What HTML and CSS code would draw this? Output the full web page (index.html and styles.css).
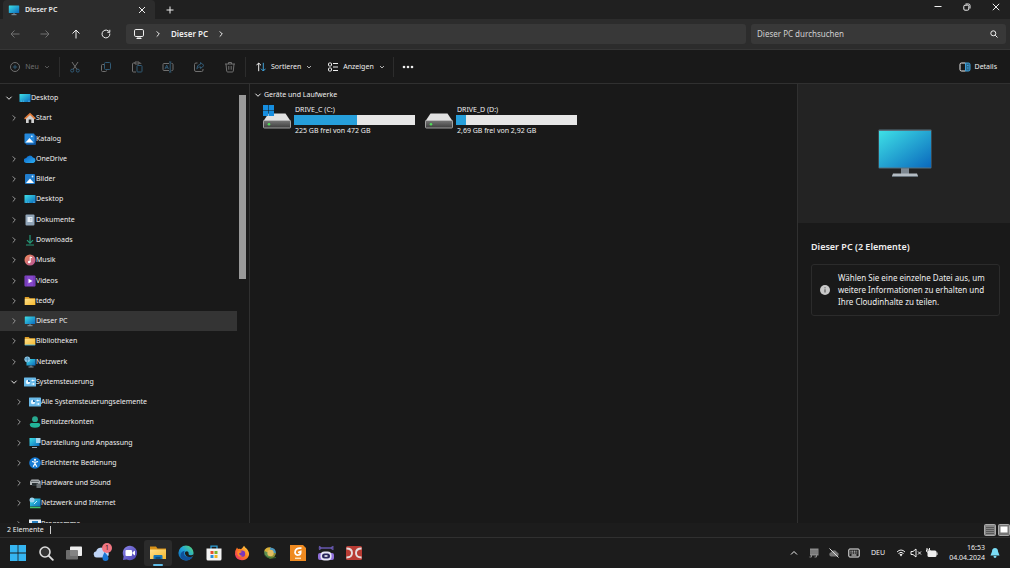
FILE: index.html
```html
<!DOCTYPE html>
<html lang="de">
<head>
    <meta charset="UTF-8">
    <meta name="viewport" content="width=device-width, initial-scale=1.0">
    <title>Dieser PC</title>
    <link rel="stylesheet" href="styles.css">
</head>
<body>

<!-- shared icons -->
<svg class="sprite" aria-hidden="true">
    <defs>
        <linearGradient id="screen" x1="0" y1="0" x2="1" y2="1"><stop offset="0" stop-color="#3ee0e6"/><stop offset="1" stop-color="#0a68bd"/></linearGradient>
        <linearGradient id="cloud" x1="0" y1="0" x2="1" y2="1"><stop offset="0" stop-color="#0b62c4"/><stop offset="1" stop-color="#2bb0f5"/></linearGradient>
        <linearGradient id="music" x1="0" y1="0" x2="1" y2="1"><stop offset="0" stop-color="#f08a55"/><stop offset="1" stop-color="#b5549a"/></linearGradient>
        <linearGradient id="gold" x1="0" y1="0" x2="1" y2="1"><stop offset="0" stop-color="#ffe08a"/><stop offset="1" stop-color="#f5b92e"/></linearGradient>
        <linearGradient id="drive" x1="0" y1="0" x2="0" y2="1"><stop offset="0" stop-color="#777"/><stop offset="1" stop-color="#3c3c3c"/></linearGradient>
        <linearGradient id="edge" x1="0" y1="1" x2="1" y2="0"><stop offset="0" stop-color="#0c59a4"/><stop offset=".5" stop-color="#1fa2dd"/><stop offset="1" stop-color="#5ee06b"/></linearGradient>
        <linearGradient id="fire" x1="1" y1="0" x2="0" y2="1"><stop offset="0" stop-color="#ffe04a"/><stop offset=".5" stop-color="#ff7a1f"/><stop offset="1" stop-color="#e8217a"/></linearGradient>
        <linearGradient id="chat" x1="0" y1="0" x2="1" y2="1"><stop offset="0" stop-color="#8a85e8"/><stop offset="1" stop-color="#4a3fb0"/></linearGradient>
    </defs>
    <symbol id="right" viewBox="0 0 8 8"><path d="M2.700 1.400 5.300 4 2.700 6.600" class="line"/></symbol>
    <symbol id="down" viewBox="0 0 8 8"><path d="M1.400 2.700 4 5.300 6.600 2.700" class="line"/></symbol>
    <symbol id="desktop" viewBox="0 0 12 12"><rect x=".5" y="2" width="11" height="8" rx=".6" fill="url(#screen)"/><path d="M2 9.200h1M4 9.200h1M9 9.200h2" stroke="#7ac7ee" stroke-width=".6"/></symbol>
    <symbol id="home" viewBox="0 0 12 12"><path d="M2 5.500 6 2l4 3.500V11H7.300V7.500H4.700V11H2z" fill="#cfcfcf"/><path d="M1.200 6.300 6 1.800l4.800 4.500" fill="none" stroke="#e07b3a" stroke-width="1.700" stroke-linecap="round"/></symbol>
    <symbol id="gallery" viewBox="0 0 12 12"><rect x="2" y="2" width="10" height="10" rx="1" fill="#11539a"/><rect x=".5" y=".5" width="10" height="10" rx="1" fill="#2589dc"/><path d="M1.500 9.500 5.500 5l4 4.500z" fill="#fff"/><circle cx="7.800" cy="3.300" r=".9" fill="#d9f0ff"/></symbol>
    <symbol id="pictures" viewBox="0 0 12 12"><rect x="1" y="1" width="10" height="10" rx="1" fill="#217dcc"/><path d="M2 10 6 5.500l4 4.500z" fill="#fff"/><circle cx="8.500" cy="3.500" r=".9" fill="#d9f0ff"/></symbol>
    <symbol id="onedrive" viewBox="0 0 12 12"><path d="M2.500 10a2.500 2.500 0 0 1-.3-5A3.800 3.800 0 0 1 9 4.500 2.800 2.800 0 0 1 9.300 10z" fill="url(#cloud)"/></symbol>
    <symbol id="document" viewBox="0 0 12 12"><rect x="1.500" y=".5" width="9" height="11" rx="1" fill="#91a5b9"/><rect x="3.500" y="3" width="5" height="5" fill="#e5edf4"/><path d="M6 4.500h1.500M6 6h1.500" stroke="#8fa5b8" stroke-width=".7"/></symbol>
    <symbol id="download" viewBox="0 0 12 12"><path d="M6 1v8M3 6.200 6 9.200l3-3M2 11h8" fill="none" stroke="#259878" stroke-width="1.200"/></symbol>
    <symbol id="musik" viewBox="0 0 12 12"><circle cx="6" cy="6" r="5.500" fill="url(#music)"/><path d="M6.200 8V3l2 .8" fill="none" stroke="#fff" stroke-width="1"/><circle cx="5.200" cy="8" r="1.300" fill="#fff"/></symbol>
    <symbol id="video" viewBox="0 0 12 12"><rect x=".5" y=".5" width="11" height="11" rx="1" fill="#8547ca"/><path d="M2 1.500v9M10 1.500v9" stroke="#4d2388" stroke-dasharray="1 1"/><path d="m4.500 3.700 4 2.300-4 2.300z" fill="#fff"/></symbol>
    <symbol id="folder" viewBox="0 0 12 12"><path d="M.8 2h4l1 1.200h5.400V10H.8z" fill="#dc9c25"/><path d="M.8 3.800h10.400V10H.8z" fill="url(#gold)"/></symbol>
    <symbol id="library" viewBox="0 0 12 12"><use href="#folder"/><path d="M.8 10h10.400" stroke="#58bfe6" stroke-width=".9"/></symbol>
    <symbol id="pc" viewBox="0 0 12 12"><rect x=".8" y="1.500" width="10.400" height="7.500" rx=".5" fill="url(#screen)"/><path d="M6 9v1.500M3.500 10.700h5" stroke="#8da1af" stroke-width=".9"/></symbol>
    <symbol id="network" viewBox="0 0 12 12"><rect x="2.500" y="3" width="9" height="6.500" fill="url(#screen)"/><path d="M7 9.500V11M4.500 11h5" stroke="#8da1af" stroke-width=".9"/><circle cx="3.300" cy="3.300" r="2.900" fill="#8dc9e8"/><path d="M1 3h4.600M3.300.6v5.300" stroke="#2f759f" stroke-width=".6"/></symbol>
    <symbol id="control" viewBox="0 0 12 12"><rect x="0" y="1.500" width="12" height="9" rx=".6" fill="#69b9e8"/><circle cx="4" cy="6" r="2.200" fill="#e8f6ff"/><path d="M4 6V3.800A2.200 2.200 0 0 1 6.200 6z" fill="#196cb0"/><path d="M7.500 4.500h3M7.500 8h3M8.500 3.700v1.600M9.500 7.200v1.600" stroke="#fff" stroke-width=".8"/></symbol>
    <symbol id="user" viewBox="0 0 12 12"><circle cx="6" cy="3.200" r="2.900" fill="#28a98f"/><path d="M.8 8.500Q.8 7 2.500 7h7q1.700 0 1.700 1.500Q11 11.700 6 11.700T.8 8.500" fill="#22b59a"/></symbol>
    <symbol id="display" viewBox="0 0 12 12"><rect x=".5" y="1" width="10" height="8" fill="url(#screen)"/><path d="M3 10.500h5" stroke="#9baab5"/><rect x="7" y="1" width="4.500" height="5" fill="#a5d3ec"/></symbol>
    <symbol id="access" viewBox="0 0 12 12"><circle cx="6" cy="6" r="5.800" fill="#177bd4"/><circle cx="6" cy="2.800" r="1.100" fill="#fff"/><path d="M3 4.500 6 5.300l3-.8M6 5v2M4.200 9.700 6 6.500l1.800 3.200" fill="none" stroke="#fff" stroke-width="1.200"/></symbol>
    <symbol id="hardware" viewBox="0 0 12 12"><path d="M1 4.500 2.500 2.500h7L11.500 4.500V8H1z" fill="#b3b8bb"/><path d="M2 4.300h8" stroke="#5e6569"/><path d="M3 6h6v3H3z" fill="#293033"/><rect x="7.500" y="6.500" width="4.500" height="4.500" fill="#686e72"/></symbol>
    <symbol id="internet" viewBox="0 0 12 12"><rect x="1" y="1.500" width="10.500" height="8" fill="url(#screen)"/><circle cx="3" cy="3" r="2.500" fill="#9bd1ed"/><path d="M1 10.500h10.500" stroke="#45c26b" stroke-width="1.500"/><path d="m5 7 3-3" stroke="#bdeeff"/></symbol>
    <symbol id="program" viewBox="0 0 12 12"><rect x="0" y="1.500" width="12" height="9.500" fill="#e8eef2"/><rect x="3" y="3" width="6" height="6" fill="#267dbd"/></symbol>
    <symbol id="hdd" viewBox="0 0 28 24"><path d="M5.500 8.500h17L27.500 16H.5z" fill="#e2e2e2"/><rect x=".5" y="15.500" width="27" height="7.500" rx=".8" fill="url(#drive)" stroke="#bcbcbc" stroke-width=".8"/><circle cx="6" cy="19.300" r="1.300" fill="#50dc58"/></symbol>
    <symbol id="windows" viewBox="0 0 16 16"><path d="M0 0h7.600v7.600H0zM8.400 0H16v7.600H8.400zM0 8.400h7.600V16H0zM8.400 8.400H16V16H8.400z"/></symbol>
</svg>

<header class="titlebar">
    <div class="tab">
        <svg class="icon-12"><use href="#pc"/></svg>
        <span class="tab-name">Dieser PC</span>
        <button class="tab-close" aria-label="Tab schließen"><svg class="icon-8" viewBox="0 0 8 8"><path d="m1 1 6 6M7 1 1 7" class="line"/></svg></button>
    </div>
    <button class="new-tab" aria-label="Neuer Tab"><svg class="icon-8" viewBox="0 0 8 8"><path d="M4 .5v7M.5 4h7" class="line"/></svg></button>
    <div class="window-buttons">
        <button aria-label="Minimieren"><svg class="icon-8" viewBox="0 0 8 8"><path d="M.5 3.500h7" class="line"/></svg></button>
        <button aria-label="Verkleinern"><svg class="icon-8" viewBox="0 0 8 8"><path d="M2.500 1h3A1.500 1.500 0 0 1 7 2.500v3" class="line"/><rect x=".8" y="2.200" width="5" height="5" rx="1.200" class="line"/></svg></button>
        <button aria-label="Schließen"><svg class="icon-8" viewBox="0 0 8 8"><path d="m.8.8 6.400 6.400M7.200.8.8 7.200" class="line"/></svg></button>
    </div>
</header>

<div class="navbar">
    <div class="nav-buttons">
        <button class="muted" aria-label="Zurück" disabled><svg class="icon-10" viewBox="0 0 10 10"><path d="M9.500 5h-8.500M4.500 1.500 1 5l3.500 3.500" class="line"/></svg></button>
        <button class="muted" aria-label="Vorwärts" disabled><svg class="icon-10" viewBox="0 0 10 10"><path d="M.5 5H9M5.500 1.500 9 5 5.500 8.500" class="line"/></svg></button>
        <button aria-label="Nach oben"><svg class="icon-10" viewBox="0 0 10 10"><path d="M5 9.500V1M1.500 4.500 5 1l3.500 3.500" class="line"/></svg></button>
        <button aria-label="Aktualisieren"><svg class="icon-10" viewBox="0 0 10 10"><path d="M8.800 4.500A3.900 3.900 0 1 1 7.300 1.900L8.500 3M8.800.8v2.500H6.300" class="line"/></svg></button>
    </div>
    <nav class="address" aria-label="Adresse">
        <svg class="icon-12" viewBox="0 0 12 12"><rect x="1.500" y="1.500" width="9" height="7" rx="1.300" class="line"/><path d="M3.500 10.500h5M5 8.500v2M7 8.500v2" class="line"/></svg>
        <svg class="icon-8"><use href="#right"/></svg>
        <button class="crumb">Dieser PC</button>
        <svg class="icon-8"><use href="#right"/></svg>
    </nav>
    <label class="search">
        <input type="search" placeholder="Dieser PC durchsuchen" aria-label="Dieser PC durchsuchen">
        <svg class="icon-8" viewBox="0 0 8 8"><circle cx="3.300" cy="3.300" r="2.500" class="line"/><path d="M5.200 5.200 7.500 7.500" class="line"/></svg>
    </label>
</div>

<div class="toolbar">
    <button class="tool new muted" disabled>
        <svg class="icon-10" viewBox="0 0 10 10"><circle cx="5" cy="5" r="4.500" class="line"/><path d="M5 2.800v4.400M2.800 5h4.400" class="line blue"/></svg>
        Neu
        <svg class="icon-6"><use href="#down"/></svg>
    </button>
    <div class="tool-group muted">
        <button aria-label="Ausschneiden" disabled><svg class="icon-12" viewBox="0 0 12 12"><path d="m3 1 5 7.500M9 1 4 8.500" class="line"/><circle cx="3.200" cy="9.600" r="1.500" class="line blue"/><circle cx="8.800" cy="9.600" r="1.500" class="line blue"/></svg></button>
        <button aria-label="Kopieren" disabled><svg class="icon-12" viewBox="0 0 12 12"><path d="M4 3.500H2.500q-1 0-1 1v5q0 1 1 1h3q1 0 1-1" class="line"/><rect x="4.500" y="1.500" width="6" height="7" rx="1" class="line blue"/></svg></button>
        <button aria-label="Einfügen" disabled><svg class="icon-12" viewBox="0 0 12 12"><path d="M5 11H2.500q-1 0-1-1V3q0-1 1-1H4m4 0h1q1 0 1 1M4 1h4v2H4z" class="line"/><rect x="6" y="4.500" width="5" height="6.500" rx=".8" class="line blue"/></svg></button>
        <button aria-label="Umbenennen" disabled><svg class="icon-12" viewBox="0 0 12 12"><path d="M7 2.500H2q-1 0-1 1v5q0 1 1 1h5M9.500 2.500h.5q1 0 1 1v5q0 1-1 1h-.5" class="line"/><path d="M8.200 1v10M7 1h2.400M7 11h2.400M3 8l1.700-4L6.400 8M3.500 6.700h2.400" class="line blue"/></svg></button>
        <button aria-label="Freigeben" disabled><svg class="icon-12" viewBox="0 0 12 12"><path d="M4.500 2H3Q1.500 2 1.500 3.500v5.500Q1.500 10.500 3 10.500h5.500Q10 10.500 10 9V8" class="line"/><path d="M7.500 1.500 11 4.500l-3.500 3V5.800Q5 5.800 3.800 7.800 4 3.500 7.500 3.200z" class="line blue"/></svg></button>
        <button aria-label="Löschen" disabled><svg class="icon-12" viewBox="0 0 12 12"><path d="M1 3h10M4.500 3V1.500h3V3M2 3l.7 7q.1 1 1 1h4.600q.9 0 1-1L10 3M4.800 5v3.700M7.200 5v3.700" class="line"/></svg></button>
    </div>
    <button class="tool sort">
        <svg class="icon-10" viewBox="0 0 10 10"><path d="M2.700 9.200V1M.4 3.300 2.700 1 5 3.300" class="line"/><path d="M7.300.8V9M5 6.700 7.300 9l2.300-2.300" class="line blue"/></svg>
        Sortieren
        <svg class="icon-6"><use href="#down"/></svg>
    </button>
    <button class="tool view">
        <svg class="icon-10" viewBox="0 0 10 10"><rect x=".5" y="1" width="3" height="3" rx=".7" class="line"/><rect x=".5" y="6" width="3" height="3" rx=".7" class="line"/><path d="M5 1.500h5M5 5h5M5 8.500h5" class="line"/></svg>
        Anzeigen
        <svg class="icon-6"><use href="#down"/></svg>
    </button>
    <button class="tool more" aria-label="Mehr anzeigen"><svg class="icon-12" viewBox="0 0 12 12"><circle cx="2" cy="6" r="1.300"/><circle cx="6" cy="6" r="1.300"/><circle cx="10" cy="6" r="1.300"/></svg></button>
    <button class="tool details-toggle">
        <svg class="icon-12" viewBox="0 0 12 12"><path d="M6.500 2H2.500Q1 2 1 3.500v5Q1 10 2.500 10h4" class="line"/><path d="M6.500 2h3Q11 2 11 3.500v5Q11 10 9.500 10h-3z" fill="#28678c" stroke="#3fa0d8"/><path d="M8 4.500h1.500M8 7h1.500" class="line blue"/></svg>
        Details
    </button>
</div>

<main class="explorer">
    <aside class="sidebar">
        <ul class="tree">
            <li><button class="root"><svg class="chevron open"><use href="#down"/></svg><svg class="icon-12"><use href="#desktop"/></svg>Desktop</button></li>
            <li><button><svg class="chevron"><use href="#right"/></svg><svg class="icon-12"><use href="#home"/></svg>Start</button></li>
            <li><button><svg class="chevron"></svg><svg class="icon-12"><use href="#gallery"/></svg>Katalog</button></li>
            <li><button><svg class="chevron"><use href="#right"/></svg><svg class="icon-12"><use href="#onedrive"/></svg>OneDrive</button></li>
            <li><button><svg class="chevron"><use href="#right"/></svg><svg class="icon-12"><use href="#pictures"/></svg>Bilder</button></li>
            <li><button><svg class="chevron"><use href="#right"/></svg><svg class="icon-12"><use href="#desktop"/></svg>Desktop</button></li>
            <li><button><svg class="chevron"><use href="#right"/></svg><svg class="icon-12"><use href="#document"/></svg>Dokumente</button></li>
            <li><button><svg class="chevron"><use href="#right"/></svg><svg class="icon-12"><use href="#download"/></svg>Downloads</button></li>
            <li><button><svg class="chevron"><use href="#right"/></svg><svg class="icon-12"><use href="#musik"/></svg>Musik</button></li>
            <li><button><svg class="chevron"><use href="#right"/></svg><svg class="icon-12"><use href="#video"/></svg>Videos</button></li>
            <li><button><svg class="chevron"><use href="#right"/></svg><svg class="icon-12"><use href="#folder"/></svg>teddy</button></li>
            <li><button class="selected"><svg class="chevron"><use href="#right"/></svg><svg class="icon-12"><use href="#pc"/></svg>Dieser PC</button></li>
            <li><button><svg class="chevron"><use href="#right"/></svg><svg class="icon-12"><use href="#library"/></svg>Bibliotheken</button></li>
            <li><button><svg class="chevron"><use href="#right"/></svg><svg class="icon-12"><use href="#network"/></svg>Netzwerk</button></li>
            <li><button><svg class="chevron open"><use href="#down"/></svg><svg class="icon-12"><use href="#control"/></svg>Systemsteuerung</button></li>
            <li><button class="sub"><svg class="chevron"><use href="#right"/></svg><svg class="icon-12"><use href="#control"/></svg>Alle Systemsteuerungselemente</button></li>
            <li><button class="sub"><svg class="chevron"><use href="#right"/></svg><svg class="icon-12"><use href="#user"/></svg>Benutzerkonten</button></li>
            <li><button class="sub"><svg class="chevron"><use href="#right"/></svg><svg class="icon-12"><use href="#display"/></svg>Darstellung und Anpassung</button></li>
            <li><button class="sub"><svg class="chevron"><use href="#right"/></svg><svg class="icon-12"><use href="#access"/></svg>Erleichterte Bedienung</button></li>
            <li><button class="sub"><svg class="chevron"><use href="#right"/></svg><svg class="icon-12"><use href="#hardware"/></svg>Hardware und Sound</button></li>
            <li><button class="sub"><svg class="chevron"><use href="#right"/></svg><svg class="icon-12"><use href="#internet"/></svg>Netzwerk und Internet</button></li>
            <li><button class="sub"><svg class="chevron"><use href="#right"/></svg><svg class="icon-12"><use href="#program"/></svg>Programme</button></li>
        </ul>
        <div class="scrollbar"><div class="thumb"></div></div>
    </aside>

    <section class="content">
        <h2 class="group-title"><svg class="icon-8"><use href="#down"/></svg>Geräte und Laufwerke</h2>
        <div class="drives">
            <div class="drive">
                <svg class="drive-icon" viewBox="0 0 28 24"><use href="#hdd" width="28" height="24"/><use href="#windows" width="11" height="11" class="badge"/></svg>
                <div class="drive-info">
                    <span>DRIVE_C (C:)</span>
                    <div class="bar"><div class="used" style="width: 52%"></div></div>
                    <span>225 GB frei von 472 GB</span>
                </div>
            </div>
            <div class="drive">
                <svg class="drive-icon" viewBox="0 0 28 24"><use href="#hdd" width="28" height="24"/></svg>
                <div class="drive-info">
                    <span>DRIVE_D (D:)</span>
                    <div class="bar"><div class="used" style="width: 8%"></div></div>
                    <span>2,69 GB frei von 2,92 GB</span>
                </div>
            </div>
        </div>
    </section>

    <aside class="details">
        <div class="preview">
            <svg class="monitor" viewBox="0 0 54 50"><path d="M23 39h8v6h-8z" fill="#7d8790"/><path d="M15 44.500h24l1 2.500H14z" fill="#b4bcc3"/><path d="M14 47h26v1H14z" fill="#66717a"/><rect x=".5" y=".5" width="53" height="39" rx="1" fill="#56717f"/><rect x="1" y="2" width="52" height="36.500" fill="url(#screen)"/></svg>
        </div>
        <div class="details-text">
            <h2>Dieser PC (2 Elemente)</h2>
            <div class="hint">
                <svg class="icon-10" viewBox="0 0 10 10"><circle cx="5" cy="5" r="5" fill="#c8c8c8"/><path d="M5 4.300v3.200M5 2.300v1" stroke="#444" stroke-width="1"/></svg>
                <p>Wählen Sie eine einzelne Datei aus, um weitere Informationen zu erhalten und Ihre Cloudinhalte zu teilen.</p>
            </div>
        </div>
    </aside>
</main>

<div class="statusbar">
    <span class="count">2 Elemente</span>
    <button aria-label="Details"><svg class="icon-12" viewBox="0 0 12 12"><rect x=".5" y=".5" width="11" height="11" rx="1" fill="#858585" stroke="#aaa"/><path d="M2 3.500h8M2 5.500h8M2 7.500h8M2 9.500h8" stroke="#444" stroke-width=".7"/></svg></button>
    <button aria-label="Kacheln"><svg class="icon-12" viewBox="0 0 12 12"><rect x=".5" y=".5" width="11" height="11" rx="1" fill="#777" stroke="#aaa"/><rect x="2.500" y="2.500" width="7" height="6" fill="#fff"/></svg></button>
</div>

<footer class="taskbar">
    <div class="apps">
        <button aria-label="Start"><svg class="icon-16 start"><use href="#windows"/></svg></button>
        <button aria-label="Suche"><svg class="icon-16" viewBox="0 0 16 16"><circle cx="7" cy="7" r="5" fill="#333" stroke="#ddd" stroke-width="1.600"/><path d="m10.800 10.800 4 4" stroke="#ddd" stroke-width="1.900" stroke-linecap="round"/></svg></button>
        <button aria-label="Taskansicht"><svg class="icon-16" viewBox="0 0 16 16"><rect x="4" y="1.500" width="12" height="9.500" rx=".8" fill="#ededed"/><rect x="0" y="5" width="12" height="9.500" rx=".8" fill="#777" fill-opacity=".9"/></svg></button>
        <button class="widgets" aria-label="Widgets"><svg class="icon-18" viewBox="0 0 18 18"><path d="M3.500 13.500a3.200 3.200 0 0 1-.3-6.300 4.800 4.800 0 0 1 9-.8 3.600 3.600 0 0 1 .8 7.100z" fill="#bfd5f6"/><path d="M11.500 8q4 4 4 6a3 3 0 0 1-6 0q0-2 2-6" fill="#1976d4"/></svg><span class="count-badge">1</span></button>
        <button aria-label="Chat"><svg class="icon-16" viewBox="0 0 16 16"><path d="M8 .8a7.200 7.200 0 1 1-3.300 13.700L1 15l.6-3.600A7.200 7.200 0 0 1 8 .8" fill="url(#chat)"/><rect x="3.500" y="5" width="6.500" height="6" rx="1" fill="#fff"/><path d="m10.500 7.300 2.500-1.800v5l-2.500-1.800z" fill="#fff"/></svg></button>
        <button class="active" aria-label="Explorer"><svg class="icon-18" viewBox="0 0 18 18"><path d="M1 2.500h6l1.500 2H17V15H1z" fill="#d99218"/><path d="M1 5.500h16V15H1z" fill="url(#gold)"/><path d="M4.500 15v-3q0-1 1-1h7q1 0 1 1v3z" fill="#1674b5"/><path d="M6.500 13h5v2h-5z" fill="#0b4d80"/></svg></button>
        <button aria-label="Edge"><svg class="icon-16" viewBox="0 0 16 16"><circle cx="8" cy="8" r="7.600" fill="url(#edge)"/><path d="M6 8.200Q6 12.500 14.500 12 12 15.600 8 15.600 3 15 2.500 10.500 2.500 6.500 7 5.800 6 6.700 6 8.200" fill="#10509a"/><path d="M6.800 8.300q0-2 2.200-2 2 .2 1.600 2.500-.3 1.500 2.200 1.500 1.700 0 2.700-1l-.7 2.100Q8 13.500 6.800 8.300" fill="#1d1d1d"/></svg></button>
        <button aria-label="Microsoft Store"><svg class="icon-16" viewBox="0 0 16 16"><path d="M5 4V1.200h6V4" fill="none" stroke="#2d9fd8" stroke-width="1.300"/><path d="M.5 3.500h15V14q0 1.500-1.500 1.500H2Q.5 15.500.5 14z" fill="#f3f3f3"/><path d="M4.500 6h3v3h-3z" fill="#e9502b"/><path d="M8.500 6h3v3h-3z" fill="#7db52a"/><path d="M4.500 10h3v3h-3z" fill="#2a8fd8"/><path d="M8.500 10h3v3h-3z" fill="#f3b61f"/></svg></button>
        <button aria-label="Firefox"><svg class="icon-16" viewBox="0 0 16 16"><path d="M10 .8q1 2 3 3.200Q16 8 14.700 11 12.500 15.300 8 15.300 2 15 1 9.500.7 5.500 3 2.500L4 4q2-.5 3 .2Q9 2.500 10 .8" fill="url(#fire)"/><circle cx="8" cy="8.700" r="3.200" fill="#7b36bd"/><path d="M3.500 6.500q2-1 4.500.3Q6.500 8 5 8.300 5.500 11 9 11 5 13 3.500 9.500" fill="#ff8b23"/></svg></button>
        <button aria-label="Bildbetrachter"><svg class="icon-16" viewBox="0 0 16 16"><path d="M2 6.500Q4 1.500 9 2.500L8 8z" fill="#d8b23c"/><path d="M8 2.500q6 0 6 6L8 8z" fill="#4c98bf"/><path d="M14 8q-1 6-7 5.500L8 8z" fill="#8a8f34"/><path d="M9 13.500q-7-.5-7-7.500l6 2z" fill="#5f9050"/><circle cx="8.500" cy="8" r="3.200" fill="#e2bd62"/><path d="M2.500 9.500Q5 14.500 14 12.500" fill="none" stroke="#37662f"/></svg></button>
        <button aria-label="PDF"><svg class="icon-16" viewBox="0 0 16 16"><path d="M0 0h13l3 3v13H0z" fill="#ef8a20"/><path d="M11.500 3.200Q5 2.500 5 7.500q.5 3 3.500 2.500Q11 9.500 10.700 6.500L8 7.500" fill="none" stroke="#fff" stroke-width="1.700"/><path d="M5 13.300h6" stroke="#ffe1b8" stroke-width="1.500"/></svg></button>
        <button aria-label="Werkzeuge"><svg class="icon-16" viewBox="0 0 16 16"><path d="M1 1.500 3 3 1 4.500M2.500 3h10M15.500 1.500 13 3l2.500 1.500" fill="none" stroke="#6657ad" stroke-width="1.700"/><rect x="0" y="8" width="16" height="7" rx="2" fill="#8f6fd8"/><rect x="2.500" y="6.500" width="11" height="9" rx="4" fill="#e7e5f6"/><rect x="4" y="8.500" width="8" height="5" rx="2.500" fill="#29265c"/><path d="M6.500 11h3" stroke="#fff" stroke-width="1.500"/></svg></button>
        <button aria-label="DC"><svg class="icon-16" viewBox="0 0 16 16"><rect x="0" y="1" width="16" height="14" rx="1.500" fill="#b83c34"/><path d="M.5 3.500Q6 3.500 6 8T.5 12.500M15.500 3.500Q10 3.500 10 8t5.500 4.500" fill="none" stroke="#e5dddd" stroke-width="1.900"/></svg></button>
    </div>
    <div class="tray">
        <button aria-label="Ausgeblendete Symbole"><svg class="icon-8" viewBox="0 0 8 8"><path d="M1 5.500 4 2.500l3 3" class="line"/></svg></button>
        <button aria-label="Gerät"><svg class="icon-10" viewBox="0 0 10 10"><path d="M1 .5h8.500v7H1z" fill="#8b8b8b"/><path d="M2.500 7v2H.5M7.500 7v2h-2" stroke="#8b8b8b" fill="none"/><path d="M1 3h8M1 5h8" stroke="#6c6c6c"/></svg></button>
        <button aria-label="OneDrive"><svg class="icon-12" viewBox="0 0 12 12"><path d="M3 9.500a2.200 2.200 0 0 1 0-4.300 3.300 3.300 0 0 1 6 0 2.200 2.200 0 0 1 0 4.300z" fill="#777"/><path d="m1.500 1.500 9 9" stroke="#ddd"/></svg></button>
        <button aria-label="Tastatur"><svg class="icon-12" viewBox="0 0 12 12"><rect x=".8" y="2" width="10.400" height="8" rx="1" class="line"/><path d="M2.500 4.200h7M2.500 6h7" class="line" stroke-dasharray="1 .7"/><path d="M3.500 8h5" class="line"/></svg></button>
        <button class="language">DEU</button>
        <button class="system" aria-label="Netzwerk, Ton, Akku">
            <svg class="icon-10" viewBox="0 0 10 10"><path d="M1 4q4-4 8 0M2.500 5.500q2.500-2.500 5 0" class="line"/><path d="M3.500 6.500 5 8.500l1.500-2Q5 5 3.500 6.500"/></svg>
            <svg class="icon-12" viewBox="0 0 12 12"><path d="M1 4.500h2L6 2v8L3 7.500H1zM8 4.500l3 3M11 4.500l-3 3" class="line"/></svg>
            <svg class="icon-12" viewBox="0 0 12 12"><rect x="1.500" y="3.500" width="9" height="6.500" rx="1.500"/><path d="M11 5.500v2.500" class="line"/><path d="M1 1v2M3.500 1v2M.5 3h3.500v1.500q-1.500 2-3.500 0z" class="line"/></svg>
        </button>
        <button class="clock">16:53<br>04.04.2024</button>
        <button aria-label="Benachrichtigungen"><svg class="icon-10 bell" viewBox="0 0 10 10"><path d="M5 0q3 0 3 3.500L9.500 7.500H.5L2 3.500Q2 0 5 0M3.500 8h3q0 2-1.500 2T3.500 8"/></svg></button>
    </div>
</footer>

</body>
</html>
```

FILE: styles.css
```css
* {
    box-sizing: border-box;
}

body {
    display: flex;
    flex-direction: column;
    height: 100vh;
    margin: 0;
    overflow: hidden;
    background: #191919;
    color: #efefef;
    font-family: "Noto Sans", "Open Sans", sans-serif;
    font-size: 7px;
    line-height: 10px;
}

button {
    display: flex;
    align-items: center;
    justify-content: center;
    padding: 0;
    border: none;
    background: none;
    color: inherit;
    font: inherit;
}

h2, p, ul {
    margin: 0;
    padding: 0;
}

/* Icons */
svg {
    flex: none;
    fill: currentColor;
}

.sprite {
    position: absolute;
    width: 0;
    height: 0;
}

.line {
    fill: none;
    stroke: currentColor;
    stroke-width: 1;
}

.blue {
    stroke: #3fa0d8;
}

.muted {
    color: #707070;
}

.muted .blue {
    stroke: #315a75;
}

.icon-6 { width: 6px; height: 6px; }
.icon-8 { width: 8px; height: 8px; }
.icon-10 { width: 10px; height: 10px; }
.icon-12 { width: 12px; height: 12px; }
.icon-16 { width: 16px; height: 16px; }
.icon-18 { width: 18px; height: 18px; }

/* Title bar */
.titlebar {
    display: flex;
    height: 19px;
    background: #202020;
}

.tab {
    display: flex;
    align-items: center;
    width: 152px;
    margin-left: 3px;
    padding: 0 9px 0 5px;
    border-radius: 4px 4px 0 0;
    background: #2c2c2c;
}

.tab-name {
    flex: 1;
    margin-left: 5px;
}

.tab-name, .crumb {
    font-weight: 600;
}

.new-tab {
    width: 29px;
}

.window-buttons {
    display: flex;
    margin-left: auto;
}

.window-buttons button {
    width: 29px;
    height: 13px;
}

/* Address and search */
.navbar {
    display: flex;
    align-items: center;
    gap: 5px;
    height: 31px;
    padding-right: 4px;
    border-bottom: 1px solid #363636;
    background: #2c2c2c;
}

.nav-buttons {
    display: flex;
    width: 121px;
}

.nav-buttons button {
    flex: 1;
}

.address {
    display: flex;
    flex: 1;
    align-items: center;
    gap: 9px;
    height: 20px;
    padding-left: 7px;
    border-radius: 3px;
    background: #383838;
    font-size: 8px;
}

.search {
    display: flex;
    align-items: center;
    width: 255px;
    height: 20px;
    padding: 0 8px 0 6px;
    border-radius: 3px;
    background: #383838;
}

.search input {
    flex: 1;
    min-width: 0;
    padding: 0;
    border: none;
    outline: none;
    background: none;
    color: inherit;
    font: inherit;
    font-size: 8px;
}

.search input::placeholder {
    color: #d0d0d0;
}

/* Toolbar */
.toolbar {
    display: flex;
    align-items: center;
    height: 34px;
    padding: 0 13px 0 11px;
    border-bottom: 1px solid #303030;
}

.tool {
    gap: 5px;
    height: 20px;
}

.new {
    width: 49px;
    padding-right: 10px;
    border-right: 1px solid #2c2c2c;
}

.tool-group {
    display: flex;
    width: 186px;
    border-right: 1px solid #2c2c2c;
}

.tool-group button {
    flex: 1;
    height: 20px;
}

.sort {
    margin-left: 10px;
}

.view {
    margin-left: 16px;
    padding-right: 8px;
    border-right: 1px solid #2c2c2c;
}

.more {
    margin-left: 8px;
}

.details-toggle {
    gap: 4px;
    margin-left: auto;
}

/* Main area */
.explorer {
    display: flex;
    flex: 1;
    min-height: 0;
}

.sidebar {
    display: flex;
    width: 250px;
    border-right: 1px solid #303030;
    overflow: hidden;
}

.tree {
    display: flex;
    flex: 1;
    flex-direction: column;
    height: calc(100% + 11px);
    padding-top: 4px;
    list-style: none;
}

.tree li {
    flex: 1;
    min-height: 0;
}

.tree button {
    justify-content: flex-start;
    width: 100%;
    height: 100%;
    padding-left: 10px;
    white-space: nowrap;
}

.tree .root {
    padding-left: 5px;
}

.tree .sub {
    padding-left: 15px;
}

.tree .selected {
    background: #343434;
}

.chevron {
    width: 8px;
    height: 8px;
    margin-right: 6px;
    color: #9a9a9a;
}

.chevron.open {
    color: #e8e8e8;
}

.scrollbar {
    width: 12px;
    padding: 11px 3px 0 2px;
}

.thumb {
    height: 43%;
    background: #999;
}

.content {
    flex: 1;
    padding: 6px 4px;
}

.group-title {
    display: flex;
    align-items: center;
    gap: 2px;
    font-size: 7px;
    font-weight: 400;
}

.drives {
    display: flex;
    flex-wrap: wrap;
    gap: 10px;
    margin-top: 5px;
    padding-left: 9px;
}

.drive {
    display: flex;
    gap: 3px;
}

.drive-icon {
    width: 28px;
    height: 24px;
}

.drive-info {
    width: 121px;
}

.drive-info span {
    display: block;
    padding-left: 1px;
}

.bar {
    height: 10px;
    margin-bottom: 1px;
    background: #e6e6e6;
}

.used {
    height: 100%;
    background: #269fdb;
}

.badge {
    fill: #168ee0;
}

.details {
    width: 213px;
    border-left: 1px solid #303030;
}

.preview {
    display: flex;
    align-items: center;
    justify-content: center;
    height: 139px;
    padding-left: 2px;
    background: #232323;
}

.monitor {
    width: 54px;
    height: 50px;
}

.details-text {
    padding: 18px 10px 0 13px;
}

.details-text h2 {
    font-size: 9px;
    font-weight: 600;
    line-height: 12px;
}

.hint {
    display: flex;
    align-items: center;
    gap: 8px;
    margin-top: 11px;
    padding: 7px 0 7px 8px;
    border: 1px solid #2b2b2b;
    border-radius: 3px;
    font-size: 8px;
    line-height: 12px;
}

/* Status bar */
.statusbar {
    display: flex;
    align-items: center;
    gap: 2px;
    height: 14px;
    padding-left: 7px;
    background: #1c1c1c;
}

.count {
    margin-right: auto;
    padding-right: 6px;
    border-right: 1px solid #ccc;
    line-height: 8px;
}

/* Taskbar */
.taskbar {
    display: flex;
    justify-content: space-between;
    height: 31px;
    border-top: 1px solid #303030;
    background: #1c1c1c;
}

.apps, .tray {
    display: flex;
    align-items: center;
}

.apps {
    padding-left: 4px;
}

.apps button {
    position: relative;
    width: 28px;
    height: 26px;
}

.apps .active {
    border-radius: 3px;
    background: #2b2b2b;
}

.apps .active::after {
    content: "";
    position: absolute;
    bottom: 0;
    left: 9px;
    width: 10px;
    height: 2px;
    border-radius: 1px;
    background: #60bde8;
}

.start {
    fill: #35b5f1;
}

.count-badge {
    position: absolute;
    top: 3px;
    right: 4px;
    width: 10px;
    height: 10px;
    border-radius: 50%;
    background: #f17682;
    color: #3c1a20;
}

.tray {
    padding-right: 5px;
}

.tray button {
    min-width: 20px;
}

.tray .language {
    width: 28px;
}

.tray .system {
    gap: 4px;
    width: 50px;
}

.tray .clock {
    justify-content: flex-end;
    width: 43px;
    text-align: right;
}

.bell {
    color: #7bdcf5;
}
```
